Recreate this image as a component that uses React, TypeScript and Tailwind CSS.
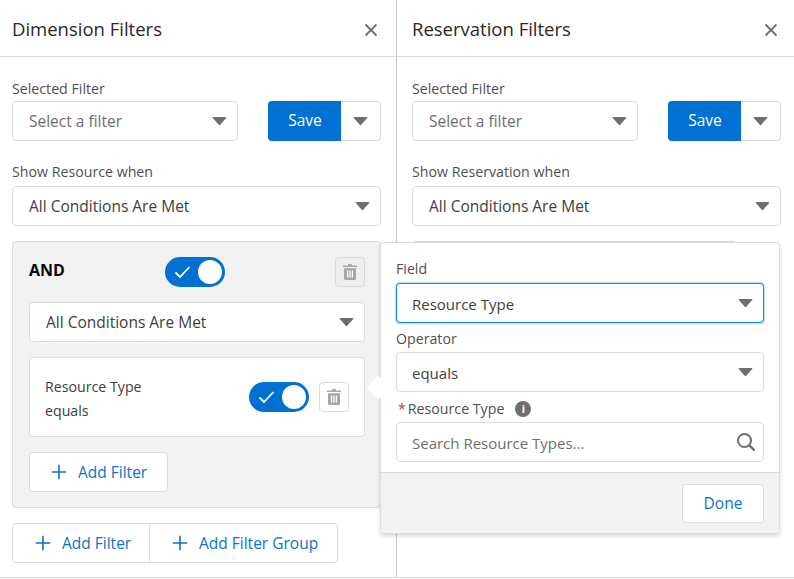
import React from 'react';

const Caret = ({ className = '' }: { className?: string }) => (
  <svg width="15" height="10" viewBox="0 0 15 10" className={className}>
    <path d="M1.2 1h12.6c.5 0 .7.5.4.9L8 9c-.3.3-.7.3-1 0L.8 1.9C.5 1.5.7 1 1.2 1z" fill="#706e6b" />
  </svg>
);

const Plus = () => (
  <svg width="16" height="16" viewBox="0 0 16 16" className="shrink-0">
    <path d="M8 .8v14.4M.8 8h14.4" stroke="#0b73ca" strokeWidth="1.6" />
  </svg>
);

const Trash = () => (
  <svg width="14" height="16" viewBox="0 0 14 16">
    <path d="M5.2 0h3.6v1.4h4.4c.4 0 .8.3.8.7v.8H0v-.8c0-.4.4-.7.8-.7h4.4z M1 4.2h12v10.6c0 .7-.5 1.2-1.2 1.2H2.2C1.5 16 1 15.500 1 14.800z" fill="#a8a6a4" />
    <path d="M4.600 6.400v7M7 6.400v7M9.400 6.400v7" stroke="#fff" strokeWidth="1.300" />
  </svg>
);

const TrashButton = ({ muted = false }: { muted?: boolean }) => (
  <div className={`w-[30px] h-[30px] rounded-[4px] border border-[#dddbda] flex items-center justify-center ${muted ? 'bg-[#f0efee]' : 'bg-white'}`}>
    <Trash />
  </div>
);

const Toggle = () => (
  <div className="w-[60px] h-[30px] rounded-full bg-[#0070d2] flex items-center justify-between pl-[9px] pr-[3px]">
    <svg width="17" height="14" viewBox="0 0 17 14">
      <path d="M1.500 7.500l4.500 4.500L15.500 2" fill="none" stroke="#fff" strokeWidth="1.800" />
    </svg>
    <div className="w-6 h-6 rounded-full bg-white" />
  </div>
);

const Select = ({ value, placeholder = false, focus = false, small = false }: { value: string; placeholder?: boolean; focus?: boolean; small?: boolean }) => (
  <div className={`h-10 w-full bg-white rounded-[4px] border flex items-center justify-between pr-[10px] ${small ? 'pl-[15px] text-[15px]' : 'pl-4'} ${focus ? 'border-[#1589ee] shadow-[0_0_2px_#1589ee]' : 'border-[#dddbda]'}`}>
    <span className={`pt-[2px] ${placeholder ? 'text-[#706e6b]' : 'text-[#3e3e3c]'}`}>{value}</span>
    <Caret />
  </div>
);

const AddButton = ({ label, className = '' }: { label: string; className?: string }) => (
  <div className={`h-10 flex items-center gap-[11px] text-[#0b73ca] ${className}`}>
    <Plus />
    <span className="pt-[2px]">{label}</span>
  </div>
);

const Panel = ({ title, when, className, pad, children }: { title: string; when: string; className: string; pad: string; children: React.ReactNode }) => (
  <div className={`flex flex-col ${className}`}>
    <div className={`h-[57px] border-b border-[#dddbda] flex items-center justify-between ${pad}`}>
      <h2 className="text-[18.5px] pt-[2px] text-[#2b2826]">{title}</h2>
      <svg width="16" height="16" viewBox="0 0 16 16" className="mt-[3px] mr-[2px]">
        <path d="M2.500 2.500l11 11M13.500 2.500l-11 11" stroke="#706e6b" strokeWidth="1.800" />
      </svg>
    </div>
    <div className={`pt-[22px] ${pad}`}>
      <div className="text-[14.2px] leading-5 text-[#514f4d] mb-[2px]">Selected Filter</div>
      <div className="flex justify-between">
        <div className="w-[226px]"><Select value="Select a filter" placeholder /></div>
        <div className="flex">
          <div className="w-[73px] h-10 pl-px rounded-l-[4px] bg-[#0070d2] text-white flex items-center justify-center">Save</div>
          <div className="w-10 h-10 rounded-r-[4px] border border-l-0 border-[#dddbda] bg-white flex items-center justify-center"><Caret /></div>
        </div>
      </div>
      <div className="text-[14.2px] leading-5 text-[#514f4d] mt-[21px] mb-[4px]">{when}</div>
      <Select value="All Conditions Are Met" />
      {children}
    </div>
  </div>
);

export default function App() {
  return (
    <div className="relative w-[794px] h-[579px] overflow-hidden bg-white text-[15.5px] font-['Open_Sans',sans-serif]">
      <div className="flex h-[578px] border-b border-[#dddbda]">
        <Panel title="Dimension Filters" when="Show Resource when" className="w-[397px] shrink-0 border-r border-[#c9c7c5]" pad="pl-3 pr-[15px]">
          <div className="mt-[15px] bg-[#f3f2f2] border border-[#dddbda] rounded-[4px] pt-[15px] pb-[15px] pl-4 pr-[15px]">
            <div className="flex items-center justify-between">
              <span className="font-bold text-[16px] text-[#080707] w-[136px] pb-[4px]">AND</span>
              <Toggle />
              <div className="ml-[110px]"><TrashButton muted /></div>
            </div>
            <div className="mt-[15px]"><Select value="All Conditions Are Met" /></div>
            <div className="mt-[15px] h-20 bg-white border border-[#dddbda] rounded-[4px] flex items-center pl-[15px] pr-[15px]">
              <div className="flex-1 text-[14.2px] leading-6 pt-1 text-[#3e3e3c]">
                <div>Resource Type</div>
                <div>equals</div>
              </div>
              <Toggle />
              <div className="ml-[10px]"><TrashButton /></div>
            </div>
            <AddButton label="Add Filter" className="mt-[15px] w-[139px] bg-white border border-[#dddbda] rounded-[4px] pl-[21px]" />
          </div>
          <div className="mt-[15px] flex w-[326px] bg-white border border-[#dddbda] rounded-[4px]">
            <AddButton label="Add Filter" className="!h-[38px] w-[137px] border-r border-[#dddbda] pl-[22px]" />
            <AddButton label="Add Filter Group" className="!h-[38px] pl-[22px]" />
          </div>
        </Panel>
        <Panel title="Reservation Filters" when="Show Reservation when" className="flex-1" pad="pl-[15px] pr-[13px]">
          <div className="mt-[15px] h-20 w-[325px] bg-[#f3f2f2] border border-[#dddbda] rounded-[4px]" />
        </Panel>
      </div>

      {/* field editor popover */}
      <div className="absolute left-[380px] top-[242px] w-[400px] h-[292px] bg-white border border-[#dddbda] rounded-[4px] shadow-[0_2px_4px_rgba(0,0,0,0.16)]">
        <div className="absolute left-[-11px] top-[136px] w-[17px] h-[17px] rotate-45 bg-white" />
        <div className="relative px-[15px] pt-4">
          <div className="text-[14.2px] leading-5 text-[#514f4d] mb-[4px]">Field</div>
          <Select value="Resource Type" focus small />
          <div className="text-[14.2px] leading-5 text-[#514f4d] mt-[6px] mb-[3px]">Operator</div>
          <Select value="equals" small />
          <div className="flex items-center text-[14.2px] leading-5 text-[#514f4d] mt-[7px] mb-[3px] pl-[2px]">
            <span className="text-[#c23934] mr-[2px]">*</span>
            <span>Resource Type</span>
            <span className="ml-[11px] w-4 h-4 rounded-full bg-[#706e6b] text-white text-[11px] font-bold flex items-center justify-center">i</span>
          </div>
          <div className="h-10 bg-white border border-[#dddbda] rounded-[4px] flex items-center justify-between pl-[15px] pr-[7px]">
            <span className="pt-[2px] text-[15px] text-[#706e6b]">Search Resource Types...</span>
            <svg width="20" height="20" viewBox="0 0 20 20">
              <circle cx="8.500" cy="8.500" r="6.500" fill="none" stroke="#706e6b" strokeWidth="2" />
              <path d="M13.300 13.300l5.200 5.200" stroke="#706e6b" strokeWidth="2.400" />
            </svg>
          </div>
        </div>
        <div className="absolute left-0 right-0 bottom-0 h-[61px] bg-[#f3f2f2] border-t border-[#dddbda] rounded-b-[4px] flex items-center justify-end pr-[15px]">
          <div className="w-[82px] h-[39px] pt-[2px] bg-white border border-[#dddbda] rounded-[4px] text-[#0b73ca] flex items-center justify-center">Done</div>
        </div>
      </div>
    </div>
  );
}
